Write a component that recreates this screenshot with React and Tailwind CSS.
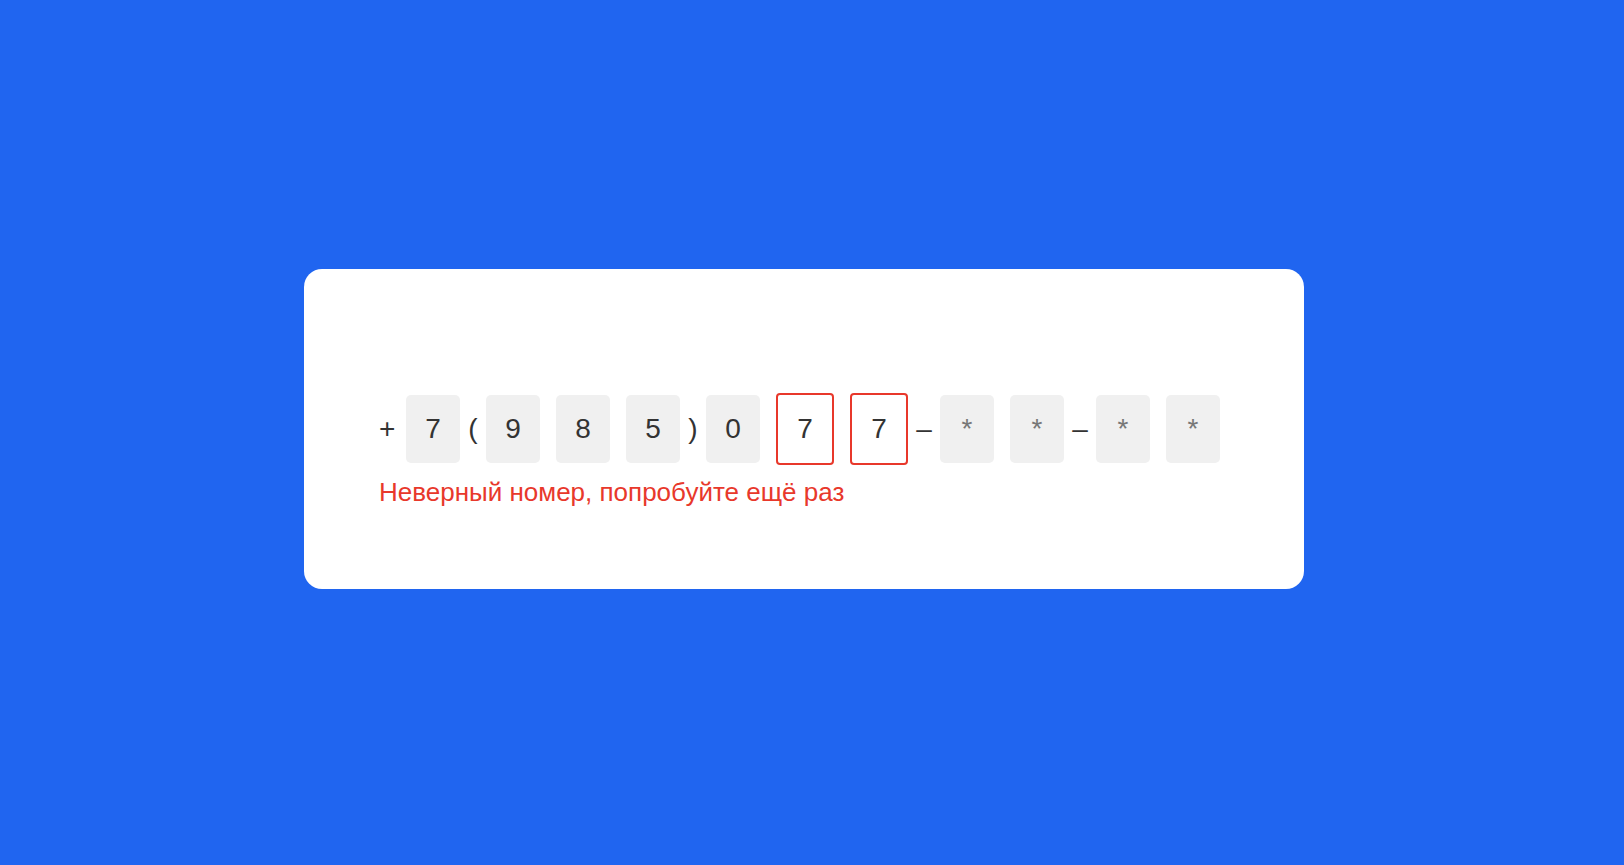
import React from "react";

const cells = [
  { type: "sep", text: "+", w: "w-[27px]", align: "text-left" },
  { type: "digit", value: "7" },
  { type: "sep", text: "(", w: "w-[26px]" },
  { type: "digit", value: "9" },
  { type: "gap" },
  { type: "digit", value: "8" },
  { type: "gap" },
  { type: "digit", value: "5" },
  { type: "sep", text: ")", w: "w-[26px]" },
  { type: "digit", value: "0" },
  { type: "gap" },
  { type: "error", value: "7" },
  { type: "gap" },
  { type: "error", value: "7" },
  { type: "sep", text: "–", w: "w-[32px]" },
  { type: "mask" },
  { type: "gap" },
  { type: "mask" },
  { type: "sep", text: "–", w: "w-[32px]" },
  { type: "mask" },
  { type: "gap" },
  { type: "mask" },
];

const Cell = ({ cell }) => {
  if (cell.type === "sep") {
    return (
      <span className={`${cell.w} ${cell.align || "text-center"} text-[28px] leading-none text-[#333333]`}>
        {cell.text}
      </span>
    );
  }
  if (cell.type === "gap") {
    return <span className="w-[16px]" />;
  }
  if (cell.type === "error") {
    return (
      <div className="w-[58px] h-[72px] rounded-[4px] border-2 border-[#e8382b] bg-white flex items-center justify-center text-[28px] text-[#333333]">
        {cell.value}
      </div>
    );
  }
  if (cell.type === "mask") {
    return (
      <div className="w-[54px] h-[68px] rounded-[5px] bg-[#f0f0f0] flex items-center justify-center text-[28px] text-[#777777]">
        *
      </div>
    );
  }
  return (
    <div className="w-[54px] h-[68px] rounded-[5px] bg-[#f0f0f0] flex items-center justify-center text-[28px] text-[#333333]">
      {cell.value}
    </div>
  );
};

export default function App() {
  return (
    <div
      className="min-h-[865px] w-full bg-[#2065f0] pt-[269px] pl-[304px]"
      style={{ fontFamily: '"Liberation Sans", Arial, sans-serif' }}
    >
      <div className="w-[1000px] h-[320px] bg-white rounded-[18px] pt-[124px] pl-[75px]">
        <div className="flex items-center h-[72px]">
          {cells.map((cell, i) => (
            <Cell key={i} cell={cell} />
          ))}
        </div>
        <p className="mt-[12px] text-[26px] leading-[30px] text-[#e8382b]">
          Неверный номер, попробуйте ещё раз
        </p>
      </div>
    </div>
  );
}
